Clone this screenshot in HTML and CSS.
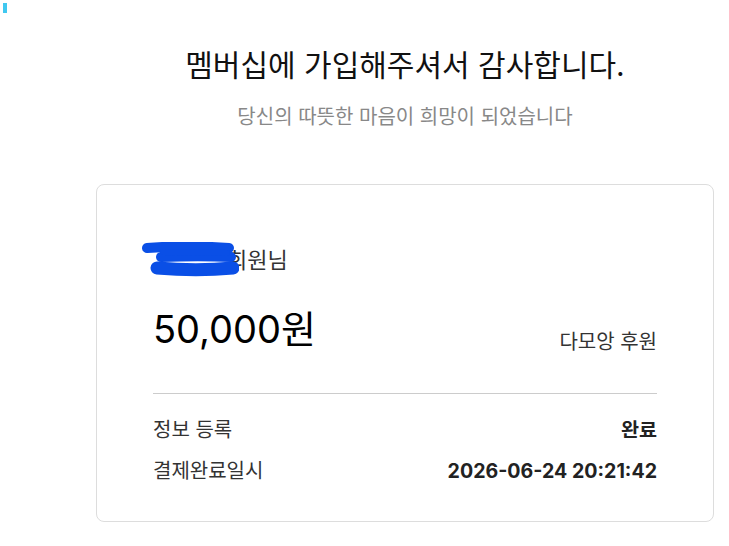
FILE: index.html
```html
<!DOCTYPE html>
<html lang="ko">

<head>
    <meta charset="UTF-8">
    <meta name="viewport" content="width=device-width, initial-scale=1.0">
    <title>멤버십 가입 완료</title>
    <link rel="stylesheet" href="styles.css">
</head>

<body>
    <div class="loader-bar"></div>
    <main class="thanks">
        <h1 class="thanks-title">멤버십에 가입해주셔서 감사합니다.</h1>
        <p class="thanks-sub">당신의 따뜻한 마음이 희망이 되었습니다</p>

        <div class="receipt">
            <div class="member">
                <span class="member-name">회원님</span>
                <!-- name hidden under a marker scribble -->
                <svg class="mask" width="98" height="36" viewBox="0 0 98 36">
                    <g stroke="#0a4fe6" stroke-linecap="round" fill="none">
                        <path d="M6 6 C30 4 60 4 88 6" stroke-width="10"/>
                        <path d="M20 15 C45 14 70 14 90 15" stroke-width="10"/>
                        <path d="M16 26 C40 28 70 28 92 26" stroke-width="13"/>
                        <path d="M22 10 L86 11" stroke-width="6"/>
                    </g>
                </svg>
            </div>
            <div class="amount-row">
                <span class="amount">50,000원</span>
                <span class="amount-type">다모앙 후원</span>
            </div>
            <div class="details">
                <div class="detail-row">
                    <span class="label">정보 등록</span>
                    <span class="value">완료</span>
                </div>
                <div class="detail-row">
                    <span class="label">결제완료일시</span>
                    <span class="value">2026-06-24 20:21:42</span>
                </div>
            </div>
        </div>
    </main>
</body>

</html>
```

FILE: styles.css
```css
body {
    font-family: Inter, "Noto Sans CJK KR", sans-serif;
    margin: 0;
    padding: 0;
    background: #fff;
    color: #111;
}

.loader-bar {
    position: absolute;
    top: 3px;
    left: 3px;
    width: 4px;
    height: 10px;
    background: #40c8f0;
}

.thanks {
    width: 618px;
    margin-left: 96px;
    padding-top: 43px;
}

.thanks-title {
    margin: 0;
    text-align: center;
    font-size: 30px;
    font-weight: 400;
    line-height: 44px;
    color: #111;
}

.thanks-sub {
    margin: 16px 0 0;
    text-align: center;
    font-size: 20px;
    line-height: 28px;
    color: #888;
}

.receipt {
    margin-top: 53px;
    border: 1px solid #ddd;
    border-radius: 8px;
    padding: 58px 56px 37px;
}

.member {
    position: relative;
    height: 34px;
    font-size: 22px;
    line-height: 34px;
    color: #333;
}

.member-name {
    display: block;
    padding-left: 74px;
}

.mask {
    position: absolute;
    top: -1px;
    left: -12px;
}

.amount-row {
    display: flex;
    justify-content: space-between;
    align-items: center;
    margin-top: 25px;
    padding-bottom: 37px;
    border-bottom: 1px solid #ccc;
}

.amount {
    font-size: 38px;
    line-height: 48px;
    color: #000;
}

.amount-type {
    font-size: 20px;
    line-height: 28px;
    color: #333;
    padding-top: 26px;
}

.details {
    padding-top: 23px;
}

.detail-row {
    display: flex;
    justify-content: space-between;
    font-size: 20px;
    line-height: 26px;
    color: #333;
    margin-bottom: 15px;
}

.detail-row:last-child {
    margin-bottom: 0;
}

.value {
    font-size: 19.6px;
    font-weight: 700;
    color: #222;
}
```
